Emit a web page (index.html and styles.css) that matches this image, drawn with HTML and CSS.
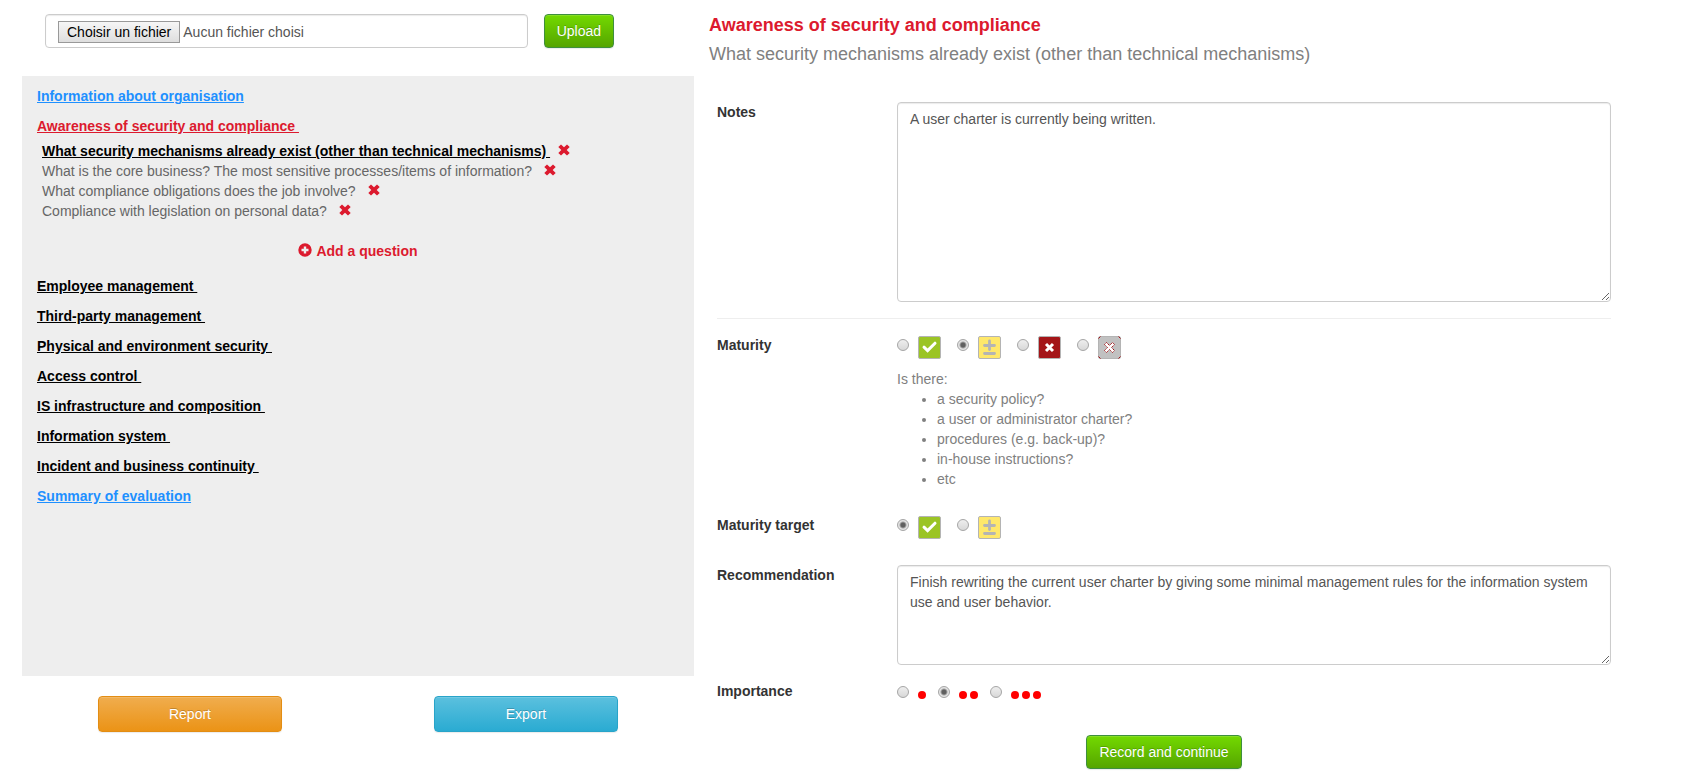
FILE: index.html
```html
<!DOCTYPE html>
<html lang="en">
<head>
<meta charset="utf-8">
<title>Awareness of security and compliance</title>
<link rel="stylesheet" href="styles.css">
</head>
<body>
<svg class="sprite" aria-hidden="true">
  <symbol id="i-remove" viewBox="0 0 12 12"><path d="M3 0.4 6 3.2 9 0.4 11.7 2.9 8.7 6 11.7 9.1 9 11.6 6 8.8 3 11.6 0.3 9.1 3.3 6 0.3 2.9Z"/></symbol>
  <symbol id="i-plus" viewBox="0 0 14 14"><path fill-rule="evenodd" d="M7 0.3a6.7 6.7 0 1 0 0 13.4A6.7 6.7 0 0 0 7 0.3ZM5.8 3.5h2.4v2.3h2.3v2.4H8.2v2.3H5.8V8.2H3.5V5.8h2.3Z"/></symbol>
  <symbol id="m-good" viewBox="0 0 23 23"><rect x=".5" y=".5" width="22" height="22" rx="1.5" fill="#9bc425" stroke="#b4b4b4"/><path d="M6 11.2 9.6 14.600 17 7.200" fill="none" stroke="#fff" stroke-width="3" stroke-linecap="round"/></symbol>
  <symbol id="m-partial" viewBox="0 0 23 23"><rect x=".5" y=".5" width="22" height="22" rx="1.5" fill="#ffe86a" stroke="#b4b4b4"/><path d="M11.500 5v8.500M6.500 9.500h10M6.500 17.500h10" fill="none" stroke="#b4b4b4" stroke-width="2.800" stroke-linecap="round"/></symbol>
  <symbol id="m-bad" viewBox="0 0 23 23"><rect x=".5" y=".5" width="22" height="22" rx="1.5" fill="#a41518" stroke="#b4b4b4"/><path d="m8 8 7 7m0-7-7 7" fill="none" stroke="#fff" stroke-width="3"/></symbol>
  <symbol id="m-none" viewBox="0 0 23 23"><rect x=".5" y=".5" width="22" height="22" rx="1.5" fill="#c1c1c1" stroke="#b4b4b4"/><path d="M.5 2.5 2.5.5M20.500 .5l2 2M22.500 20.500l-2 2M2.500 22.500l-2-2" fill="none" stroke="#a41518"/><path d="m8.500 6.500 3 3 3-3 2 2-3 3 3 3-2 2-3-3-3 3-2-2 3-3-3-3Z" fill="#fff" stroke="#a41518" stroke-dasharray="1.500 .7"/></symbol>
</svg>
<div class="page">
  <div class="side">
    <form class="upload">
      <label class="file">
        <input type="file" class="file-input">
        <span class="file-button">Choisir un fichier</span>
        <span>Aucun fichier choisi</span>
      </label>
      <button type="button" class="btn btn-green">Upload</button>
    </form>
    <nav class="panel">
      <a class="title info" href="#">Information about organisation</a>
      <a class="title current" href="#">Awareness of security and compliance&nbsp;</a>
      <ul class="questions">
        <li><a class="active" href="#">What security mechanisms already exist (other than technical mechanisms)&nbsp;</a><button type="button" class="remove" aria-label="Remove"><svg><use href="#i-remove"/></svg></button></li>
        <li><a href="#">What is the core business? The most sensitive processes/items of information?&nbsp;</a><button type="button" class="remove" aria-label="Remove"><svg><use href="#i-remove"/></svg></button></li>
        <li><a href="#">What compliance obligations does the job involve?&nbsp;</a><button type="button" class="remove" aria-label="Remove"><svg><use href="#i-remove"/></svg></button></li>
        <li><a href="#">Compliance with legislation on personal data?&nbsp;</a><button type="button" class="remove" aria-label="Remove"><svg><use href="#i-remove"/></svg></button></li>
      </ul>
      <button type="button" class="add"><svg><use href="#i-plus"/></svg>Add a question</button>
      <a class="title" href="#">Employee management&nbsp;</a>
      <a class="title" href="#">Third-party management&nbsp;</a>
      <a class="title" href="#">Physical and environment security&nbsp;</a>
      <a class="title" href="#">Access control&nbsp;</a>
      <a class="title" href="#">IS infrastructure and composition&nbsp;</a>
      <a class="title" href="#">Information system&nbsp;</a>
      <a class="title" href="#">Incident and business continuity&nbsp;</a>
      <a class="title info" href="#">Summary of evaluation</a>
    </nav>
    <div class="actions">
      <button type="button" class="btn btn-orange">Report</button>
      <button type="button" class="btn btn-blue">Export</button>
    </div>
  </div>
  <main class="main">
    <h1>Awareness of security and compliance</h1>
    <h2>What security mechanisms already exist (other than technical mechanisms)</h2>
    <form class="form">
      <div class="row notes">
        <label class="name" for="notes">Notes</label>
        <textarea id="notes" rows="9">A user charter is currently being written.</textarea>
      </div>
      <hr>
      <div class="row maturity" role="radiogroup" aria-labelledby="maturity">
        <span class="name" id="maturity">Maturity</span>
        <div>
          <div class="choices">
            <label class="choice"><input type="radio" name="maturity" aria-label="Good"><svg><use href="#m-good"/></svg></label>
            <label class="choice"><input type="radio" name="maturity" aria-label="Partial" checked><svg><use href="#m-partial"/></svg></label>
            <label class="choice"><input type="radio" name="maturity" aria-label="Bad"><svg><use href="#m-bad"/></svg></label>
            <label class="choice"><input type="radio" name="maturity" aria-label="Not applicable"><svg><use href="#m-none"/></svg></label>
          </div>
          <div class="hint">
            Is there:
            <ul>
              <li>a security policy?</li>
              <li>a user or administrator charter?</li>
              <li>procedures (e.g. back-up)?</li>
              <li>in-house instructions?</li>
              <li>etc</li>
            </ul>
          </div>
        </div>
      </div>
      <div class="row target" role="radiogroup" aria-labelledby="target">
        <span class="name" id="target">Maturity target</span>
        <div class="choices">
          <label class="choice"><input type="radio" name="target" aria-label="Good" checked><svg><use href="#m-good"/></svg></label>
          <label class="choice"><input type="radio" name="target" aria-label="Partial"><svg><use href="#m-partial"/></svg></label>
        </div>
      </div>
      <div class="row recommendation">
        <label class="name" for="recommendation">Recommendation</label>
        <textarea id="recommendation" rows="4">Finish rewriting the current user charter by giving some minimal management rules for the information system use and user behavior.</textarea>
      </div>
      <div class="row importance" role="radiogroup" aria-labelledby="importance">
        <span class="name" id="importance">Importance</span>
        <div class="levels">
          <label class="level"><input type="radio" name="importance" aria-label="Low"><span class="dots"><i></i></span></label>
          <label class="level"><input type="radio" name="importance" aria-label="Medium" checked><span class="dots"><i></i><i></i></span></label>
          <label class="level"><input type="radio" name="importance" aria-label="High"><span class="dots"><i></i><i></i><i></i></span></label>
        </div>
      </div>
      <button type="button" class="btn btn-green record">Record and continue</button>
    </form>
  </main>
</div>
</body>
</html>
```

FILE: styles.css
```css
* { box-sizing: border-box; }

body {
  margin: 0;
  background: #fff;
  color: #333;
  font: 14px/20px "Liberation Sans", Arial, sans-serif;
}

button, input, textarea { font: inherit; }
h1, h2, ul { margin: 0; padding: 0; }

.sprite { display: none; }

.page {
  display: grid;
  grid-template-columns: 672fr 902fr;
  column-gap: 15px;
  padding: 14px 74px 8px 22px;
}

/* Left column */
.upload {
  display: flex;
  gap: 16px;
  padding: 0 80px 0 23px;
}

.file {
  position: relative;
  display: flex;
  flex: 1;
  align-items: center;
  gap: 3px;
  height: 34px;
  padding: 2px 12px 0;
  border: 1px solid #ccc;
  border-radius: 4px;
  box-shadow: inset 0 1px 1px rgba(0, 0, 0, .08);
  color: #555;
}

.file-input {
  position: absolute;
  inset: 0;
  width: 100%;
  opacity: 0;
}

.file-button {
  padding: 0 8px;
  border: 1px solid #999;
  background: linear-gradient(#f6f6f6, #dedede);
  color: #000;
}

.btn {
  padding: 6px 12px;
  border: 1px solid;
  border-radius: 4px;
  box-shadow: inset 0 1px 0 rgba(255, 255, 255, .15), 0 1px 1px rgba(0, 0, 0, .08);
  color: #fff;
  text-shadow: 0 -1px 0 rgba(0, 0, 0, .2);
}

.btn-green { border-color: #3e8f3e; background: linear-gradient(#73d900, #55a500); }
.btn-orange { border-color: #e38d13; background: linear-gradient(#f0ad4e, #eb9316); }
.btn-blue { border-color: #28a4c9; background: linear-gradient(#5bc0de, #2aabd2); }

.panel {
  display: flex;
  flex-direction: column;
  align-items: flex-start;
  gap: 10px;
  min-height: 600px;
  margin-top: 28px;
  padding: 10px 15px;
  background: #eee;
}

.title { color: #000; font-weight: bold; }
.info { color: #1e90ff; }
.current { color: #dc1a2e; }

.questions {
  margin-top: -5px;
  padding-left: 5px;
  list-style: none;
}

.questions li { display: flex; gap: 8px; }
.questions a { color: #666; text-decoration: none; }
.questions .active { color: #000; font-weight: bold; text-decoration: underline; }

.remove, .add {
  padding: 0;
  border: 0;
  background: none;
  color: #dc1a2e;
  cursor: pointer;
}

.remove { height: 12px; margin-top: 3px; }
.remove svg { display: block; width: 12px; height: 12px; fill: currentColor; }

.add {
  display: flex;
  align-self: center;
  gap: 4px;
  margin: 10px 0 5px;
  font-weight: bold;
}

.add svg { width: 14px; height: 14px; margin-top: 2px; fill: currentColor; }

.actions {
  display: grid;
  grid-template-columns: 1fr 1fr;
  justify-items: center;
  margin-top: 20px;
}

.actions .btn { width: 55%; padding: 7px 12px; }

/* Right column */
.main { padding-top: 1px; }
h1, h2 { font-size: 18px; line-height: 20px; }
h1 { color: #dc1a2e; }
h2 { margin-top: 9px; color: #808080; font-weight: normal; }

.form {
  display: flex;
  flex-direction: column;
  padding: 38px 0 0 8px;
}

.row {
  display: grid;
  grid-template-columns: 180fr 714fr;
  align-items: start;
}

.name { font-weight: bold; }

textarea {
  display: block;
  width: 100%;
  padding: 6px 12px;
  border: 1px solid #ccc;
  border-radius: 4px;
  box-shadow: inset 0 1px 1px rgba(0, 0, 0, .08);
  color: #555;
  resize: vertical;
}

#notes { height: 200px; }
#recommendation { height: 100px; }

hr {
  width: 100%;
  margin: 16px 0;
  border: 0;
  border-top: 1px solid #eee;
}

input[type="radio"] {
  appearance: none;
  width: 12px;
  height: 12px;
  margin: 0;
  border: 1px solid #a5a5a5;
  border-radius: 50%;
  background: linear-gradient(#eee, #d8d8d8);
}

input[type="radio"]:checked {
  background: radial-gradient(circle, #606060 0 2px, #e4e4e4 4px);
}

.choices { display: flex; gap: 16px; }
.choice { display: flex; gap: 9px; }
.choice input { margin-top: 4px; }
.choice svg { width: 23px; height: 23px; margin-top: 1px; }

.hint { margin-top: 10px; color: #808080; }
.hint ul { padding-left: 40px; }

.target { margin-top: 26px; }
.recommendation { margin-top: 26px; }
.importance { margin-top: 16px; }

.levels { display: flex; gap: 12px; }
.level { display: flex; gap: 9px; padding-top: 5px; }
.dots { display: flex; gap: 3px; margin-top: 5px; }
.dots i { width: 8px; height: 8px; border-radius: 50%; background: #f00; }

.record { align-self: center; margin-top: 34px; }
```
